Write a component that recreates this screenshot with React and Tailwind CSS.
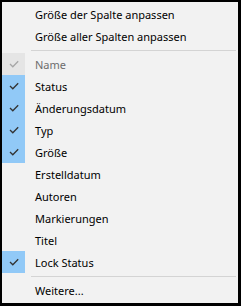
import React from 'react';

const items = [
  { label: 'Name', checked: true, disabled: true },
  { label: 'Status', checked: true },
  { label: 'Änderungsdatum', checked: true },
  { label: 'Typ', checked: true },
  { label: 'Größe', checked: true },
  { label: 'Erstelldatum' },
  { label: 'Autoren' },
  { label: 'Markierungen' },
  { label: 'Titel' },
  { label: 'Lock Status', checked: true },
];

const Check = ({ color }) => (
  <svg width="10" height="8" viewBox="0 0 10 8" fill="none">
    <path d="M1 4 L3.8 6.8 L9.2 1.2" stroke={color} strokeWidth="1.3" />
  </svg>
);

const Row = ({ label, checked, disabled }) => (
  <div className="flex h-[22px] items-center">
    <div
      className={`w-[23px] h-full flex items-center justify-center ${
        checked ? (disabled ? 'bg-[#e5e5e5]' : 'bg-[#91c9f7]') : ''
      }`}
    >
      {checked && <Check color={disabled ? '#a6a6a6' : '#333333'} />}
    </div>
    <span className={`ml-[10px] ${disabled ? 'text-[#6d6d6d]' : 'text-black'}`}>{label}</span>
  </div>
);

const Separator = () => (
  <div className="h-[6px] flex items-center pl-[29px] pr-[2px]">
    <div className="h-px w-full bg-[#d4d4d4]" />
  </div>
);

export default function App() {
  return (
    <div
      className="w-[241px] h-[306px] bg-[#f2f2f2] border-black border-l-2 border-t-2 border-r-[3px] border-b-[3px] pt-px text-[11px] leading-none"
      style={{ fontFamily: '"Noto Sans", "Open Sans", sans-serif' }}
    >
      <Row label="Größe der Spalte anpassen" />
      <Row label="Größe aller Spalten anpassen" />
      <Separator />
      {items.map((it) => (
        <Row key={it.label} {...it} />
      ))}
      <Separator />
      <Row label="Weitere..." />
    </div>
  );
}
